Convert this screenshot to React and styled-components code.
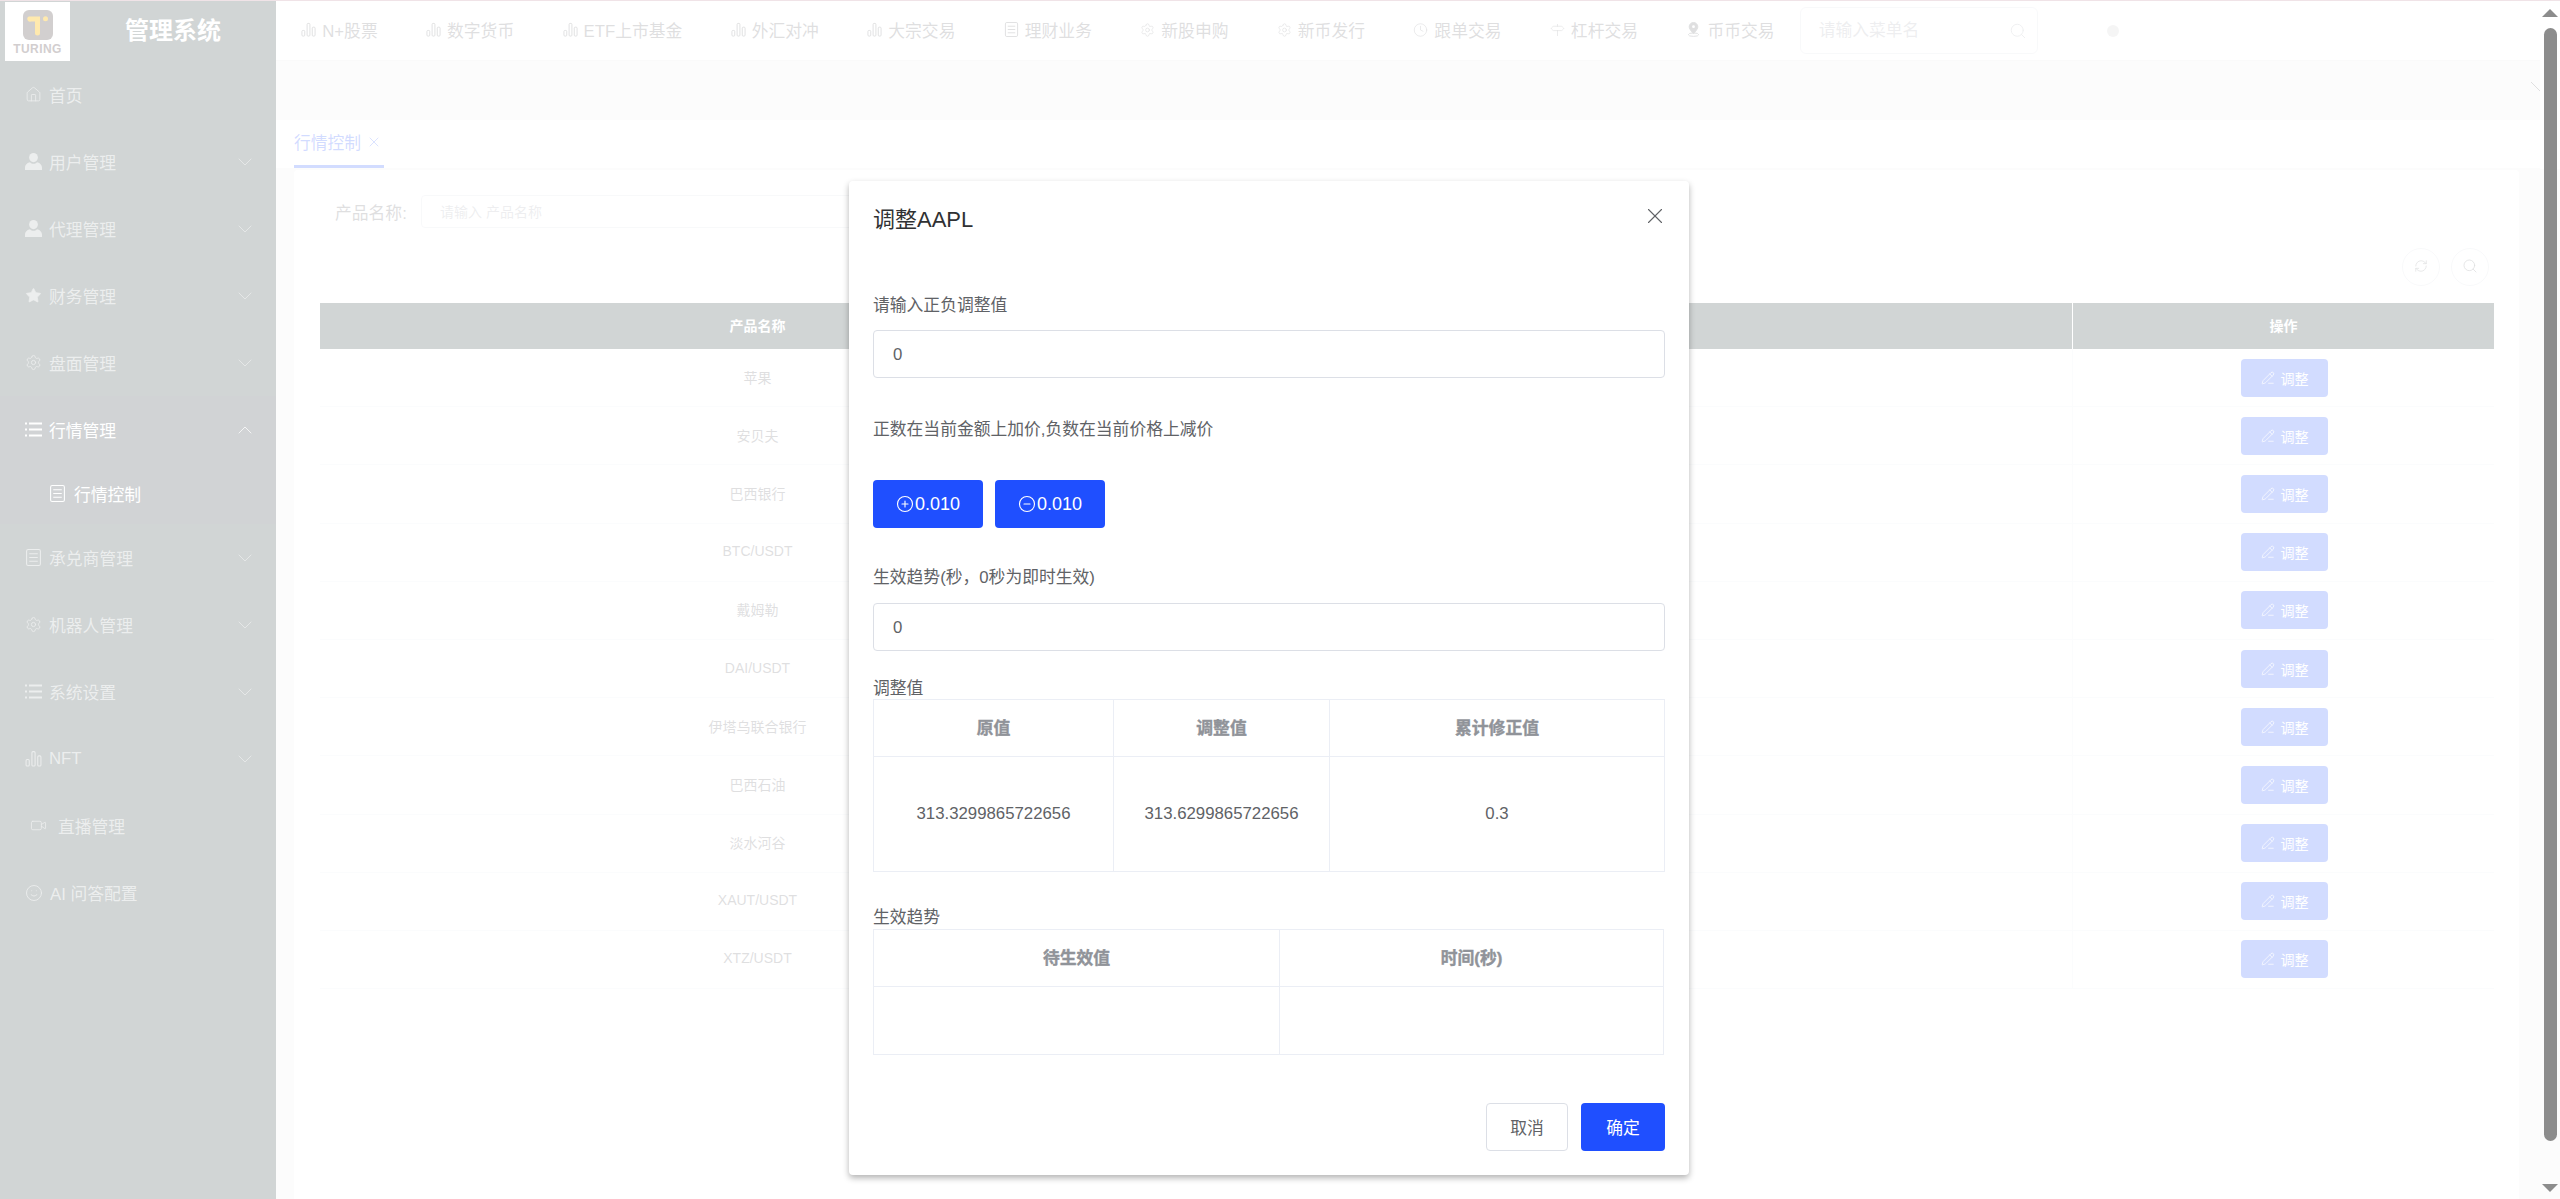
import React from "react";
import styled, { createGlobalStyle } from "styled-components";
import {
  ChevronDown,
  ChevronUp,
  CircleMinus,
  CirclePlus,
  Clock,
  House,
  PencilLine,
  RefreshCw,
  Search,
  Settings,
  Signpost,
  Smile,
  Star,
  Video,
  X,
} from "lucide-react";

const GlobalStyle = createGlobalStyle`
  html, body {
    margin: 0;
    height: 100%;
    overflow: hidden;
    background: #fff;
  }
  body, input, button {
    font-family: "Liberation Sans", "Noto Sans CJK SC", sans-serif;
  }
  * {
    box-sizing: border-box;
  }
`;

const BarsIcon = ({ size = 15 }) => (
  <svg width={size} height={size} viewBox="0 0 16 16" fill="none" stroke="currentColor" strokeWidth="1">
    <rect x="1" y="9" width="3" height="6" rx="1" />
    <rect x="6.5" y="1.5" width="3" height="13.5" rx="1" />
    <rect x="12" y="5.5" width="3" height="9.5" rx="1" />
  </svg>
);

const DocIcon = ({ size = 15 }) => (
  <svg width={size} height={size} viewBox="0 0 16 16" fill="none" stroke="currentColor" strokeWidth="1">
    <rect x="1.5" y="0.5" width="13" height="15" rx="1.5" />
    <path d="M4 4.5h8M4 8h8M4 11.5h8" />
  </svg>
);

const PinIcon = ({ size = 15 }) => (
  <svg width={size} height={size} viewBox="0 0 16 16" fill="none" stroke="currentColor" strokeWidth="1">
    <path
      d="M8 .5a4.6 4.6 0 0 0-4.6 4.6C3.4 8 8 12.5 8 12.5s4.6-4.5 4.6-7.4A4.6 4.6 0 0 0 8 .5Z"
      fill="currentColor"
    />
    <circle cx="8" cy="5" r="1.5" fill="#fff" stroke="none" />
    <ellipse cx="8" cy="13.5" rx="5.5" ry="1.8" />
  </svg>
);

const ListIcon = ({ size = 17 }) => (
  <svg width={size} height={size} viewBox="0 0 17 17" fill="currentColor">
    <rect x="0" y="1.5" width="2" height="2" />
    <rect x="4" y="1.5" width="13" height="2" />
    <rect x="0" y="7.5" width="2" height="2" />
    <rect x="4" y="7.5" width="13" height="2" />
    <rect x="0" y="13.5" width="2" height="2" />
    <rect x="4" y="13.5" width="13" height="2" />
  </svg>
);

const UserIcon = ({ size = 17 }) => (
  <svg width={size} height={size} viewBox="0 0 17 17" fill="currentColor">
    <ellipse cx="8.5" cy="4.6" rx="4.4" ry="4.6" />
    <path d="M0 17v-2.6C0 11.6 2.6 9.6 5 9.2c1 1 2.2 1.5 3.5 1.5S11 10.200 12 9.200c2.400.4 5 2.400 5 5.200V17Z" />
  </svg>
);

const Page = styled.div`
  display: flex;
  flex-direction: column;
  height: 100vh;
`;

const TopLine = styled.div`
  flex: 0 0 1px;
  background: #f0e3e7;
`;

const Shell = styled.div`
  flex: 1;
  min-height: 0;
  display: flex;
`;

const Viewport = styled.div`
  position: relative;
  flex: 1;
  min-width: 0;
  display: flex;
`;

const Sidebar = styled.aside`
  flex: 0 0 276px;
  display: flex;
  flex-direction: column;
  background: #192d2d;
`;

const Brand = styled.div`
  display: flex;
  align-items: center;
  height: 60px;
`;

const LogoBox = styled.div`
  position: relative;
  z-index: 11;
  display: flex;
  flex-direction: column;
  align-items: center;
  width: 65px;
  height: 59px;
  margin-left: 5px;
  padding-top: 8px;
  background: #fff;
`;

const LogoMark = styled.svg`
  display: block;
  width: 30px;
  height: 30px;
`;

const LogoText = styled.span`
  margin-top: 1px;
  font-size: 12px;
  font-weight: 700;
  letter-spacing: 0.4px;
  line-height: 16px;
  color: #d2cecf;
`;

const BrandTitle = styled.h1`
  margin: 0 0 5px 55px;
  font-size: 24px;
  font-weight: 700;
  color: #fff;
`;

const MenuRow = styled.div`
  display: flex;
  align-items: center;
  gap: ${(p) => (p.$wide ? "11px" : "7px")};
  height: 67px;
  padding: 0 19px 0 ${(p) => (p.$wide ? "30px" : "25px")};
  font-size: 16.8px;
  color: ${(p) => (p.$active ? "#fff" : "#a0a8a8")};
  background: ${(p) => (p.$active ? "#192530" : "transparent")};
`;

const MenuArrow = styled.span`
  display: flex;
  margin-left: auto;
  opacity: 0.75;
`;

const SubRow = styled.div`
  display: flex;
  align-items: center;
  gap: 8px;
  height: 61px;
  padding-left: 49px;
  font-size: 16.8px;
  color: #fff;
  background: #192530;
`;

const Main = styled.div`
  flex: 1;
  min-width: 0;
  display: flex;
  flex-direction: column;
`;

const Header = styled.header`
  display: flex;
  align-items: center;
  height: 60px;
  padding-left: 1px;
  border-bottom: 1px solid #e6e6e6;
`;

const NavItem = styled.div`
  display: flex;
  align-items: center;
  gap: 6px;
  margin-top: -2px;
  padding: 0 24.2px;
  font-size: 16.8px;
  white-space: nowrap;
  color: #606266;
`;

const NavIcon = styled.span`
  display: flex;
  justify-content: center;
  width: 15px;
`;

const MenuSearch = styled.div`
  display: flex;
  align-items: center;
  width: 238px;
  height: 47px;
  margin-left: 1px;
  padding: 0 10px 0 18px;
  border: 1px solid #dcdfe6;
  border-radius: 6px;
  color: #a8abb2;
`;

const MenuSearchInput = styled.input`
  flex: 1;
  min-width: 0;
  border: 0;
  outline: 0;
  padding: 0;
  font-size: 16.8px;
  &::placeholder {
    color: #a8abb2;
  }
`;

const Avatar = styled.div`
  width: 12px;
  height: 12px;
  margin-left: 69px;
  border-radius: 50%;
  background: #cdcdcd;
`;

const Crumbs = styled.div`
  display: flex;
  justify-content: flex-end;
  height: 59px;
  padding-top: 21px;
  background: #f0f0f0;
  color: #606266;
`;

const TabBar = styled.div`
  display: flex;
  height: 48px;
  padding-left: 18px;
`;

const Tab = styled.div`
  display: flex;
  align-items: center;
  gap: 5px;
  width: 90px;
  height: 48px;
  padding-bottom: 1px;
  border-bottom: 3px solid #1f4fff;
  font-size: 16.8px;
  white-space: nowrap;
  color: #1f4fff;
`;

const Content = styled.div`
  flex: 1;
  min-height: 0;
  display: flex;
  padding: 2px 21px 0 18px;
  background: #f0f0f0;
`;

const Card = styled.section`
  flex: 1;
  min-width: 0;
  padding: 25px 25px 0 26px;
  border-radius: 4px 4px 0 0;
  background: #fff;
`;

const FilterRow = styled.div`
  display: flex;
  align-items: center;
  gap: 16px;
  padding-left: 15px;
`;

const FilterLabel = styled.label`
  width: 70px;
  font-size: 16.8px;
  white-space: nowrap;
  color: #606266;
`;

const FilterInput = styled.input`
  width: 520px;
  height: 33px;
  padding: 0 18px;
  border: 1px solid #dcdfe6;
  border-radius: 4px;
  outline: 0;
  font-size: 14px;
  &::placeholder {
    color: #a8abb2;
  }
`;

const Tools = styled.div`
  display: flex;
  justify-content: flex-end;
  gap: 11px;
  margin: 20px 5px 17px 0;
`;

const RoundButton = styled.button`
  display: flex;
  align-items: center;
  justify-content: center;
  width: 38px;
  height: 38px;
  padding: 0 0 2px;
  border: 1px solid #dcdfe6;
  border-radius: 50%;
  background: #fff;
  color: #606266;
`;

const GRID = "876px 877px 421px";

const TableHead = styled.div`
  display: grid;
  grid-template-columns: ${GRID};
  height: 46px;
  background: #192d2d;
  font-size: 14px;
  font-weight: 700;
  color: #fff;
`;

const HeadCell = styled.div`
  display: flex;
  align-items: center;
  justify-content: center;
  padding-bottom: 3px;
  border-right: 1px solid #fff;
  &:last-child {
    border-right: 0;
  }
`;

const TableRow = styled.div`
  display: grid;
  grid-template-columns: ${GRID};
  height: 58.2px;
  border-bottom: 1px solid #ebeef5;
  font-size: 14px;
  color: #606266;
`;

const RowCell = styled.div`
  display: flex;
  align-items: center;
  justify-content: center;
  padding: ${(p) => (p.$action ? "0 0 0 2px" : "0 0 2px")};
  border-right: 1px solid #ebeef5;
  &:last-child {
    border-right: 0;
  }
`;

const AdjustButton = styled.button`
  display: flex;
  align-items: center;
  justify-content: center;
  gap: 6px;
  width: 87px;
  height: 38px;
  padding: 0;
  border: 0;
  border-radius: 4px;
  background: #1f4fff;
  font-size: 14px;
  color: #fff;
`;

const ScrollTrack = styled.div`
  flex: 0 0 20px;
  display: flex;
  flex-direction: column;
  align-items: center;
  padding: 8px 0 7px;
  background: linear-gradient(#fff 168px, #fcfcfc 168px);
`;

const ScrollArrow = styled.div`
  width: 0;
  height: 0;
  border-left: 8px solid transparent;
  border-right: 8px solid transparent;
  ${(p) => (p.$down ? "border-top: 8px solid #8c8c8c;" : "border-bottom: 8px solid #8c8c8c;")}
`;

const ScrollThumb = styled.div`
  width: 13px;
  height: 1113px;
  margin: 11px 0 auto;
  border-radius: 7px;
  background: #8c8c8c;
`;

const Overlay = styled.div`
  position: absolute;
  inset: 0;
  z-index: 10;
  display: flex;
  justify-content: center;
  padding: 180px 2px 0 0;
  background: rgba(255, 255, 255, 0.8);
`;

const Modal = styled.div`
  width: 840px;
  height: 994px;
  padding: 0 24px;
  border-radius: 4px;
  background: #fff;
  box-shadow: 0 3px 6px rgba(0, 0, 0, 0.3);
`;

const ModalHead = styled.div`
  display: flex;
  align-items: center;
  justify-content: space-between;
  height: 76px;
  padding-bottom: 4px;
  color: #303133;
`;

const ModalTitle = styled.h2`
  margin: 0;
  font-size: 22px;
  font-weight: 400;
`;

const CloseButton = styled.span`
  display: flex;
  margin: -2px -3px 0 0;
  color: #606266;
`;

const FieldLabel = styled.div`
  margin-top: ${(p) => p.$top}px;
  font-size: 16.8px;
  line-height: ${(p) => p.$line || 24}px;
  color: #606266;
`;

const FieldInput = styled.input`
  display: block;
  width: 100%;
  height: 48px;
  margin-top: ${(p) => p.$top}px;
  padding: 2px 19px 0;
  border: 1px solid #dcdfe6;
  border-radius: 4px;
  outline: 0;
  font-size: 16.8px;
  color: #606266;
`;

const StepRow = styled.div`
  display: flex;
  gap: 12px;
  margin-top: 38px;
`;

const PrimaryButton = styled.button`
  display: flex;
  align-items: center;
  justify-content: center;
  gap: 1px;
  width: ${(p) => p.$width}px;
  height: 48px;
  padding: 0;
  border: 0;
  border-radius: 4px;
  background: #1f4fff;
  font-size: ${(p) => p.$size || 16.8}px;
  color: #fff;
`;

const GhostButton = styled.button`
  width: 82px;
  height: 48px;
  padding: 0;
  border: 1px solid #dcdfe6;
  border-radius: 4px;
  background: #fff;
  font-size: 16.8px;
  color: #606266;
`;

const InfoTable = styled.div`
  display: grid;
  grid-template-columns: ${(p) => p.$cols};
  grid-template-rows: 57px ${(p) => p.$body}px;
  width: ${(p) => p.$width}px;
  border-top: 1px solid #ebeef5;
  border-left: 1px solid #ebeef5;
`;

const InfoCell = styled.div`
  display: flex;
  align-items: center;
  justify-content: center;
  padding-bottom: ${(p) => (p.$head ? "3px" : "0")};
  border-right: 1px solid #ebeef5;
  border-bottom: 1px solid #ebeef5;
  font-size: 16.8px;
  font-weight: ${(p) => (p.$head ? 700 : 400)};
  color: ${(p) => (p.$head ? "#909399" : "#606266")};
  -webkit-text-stroke: ${(p) => (p.$head ? "0.4px #909399" : "0")};
`;

const ModalFooter = styled.div`
  display: flex;
  justify-content: flex-end;
  gap: 13px;
  margin-top: 48px;
`;

const menuTop = [
  { icon: <House size={17} strokeWidth={1.2} />, text: "首页" },
  { icon: <UserIcon />, text: "用户管理", arrow: true },
  { icon: <UserIcon />, text: "代理管理", arrow: true },
  { icon: <Star size={17} strokeWidth={1} fill="currentColor" />, text: "财务管理", arrow: true },
  { icon: <Settings size={17} strokeWidth={1.2} />, text: "盘面管理", arrow: true },
];

const menuBottom = [
  { icon: <DocIcon size={17} />, text: "承兑商管理", arrow: true },
  { icon: <Settings size={17} strokeWidth={1.2} />, text: "机器人管理", arrow: true },
  { icon: <ListIcon />, text: "系统设置", arrow: true },
  { icon: <BarsIcon size={17} />, text: "NFT", arrow: true },
  { icon: <Video size={17} strokeWidth={1.2} />, text: "直播管理", wide: true },
  { icon: <Smile size={18} strokeWidth={1.2} />, text: "AI 问答配置" },
];

const navItems = [
  { icon: <BarsIcon />, text: "N+股票" },
  { icon: <BarsIcon />, text: "数字货币" },
  { icon: <BarsIcon />, text: "ETF上市基金" },
  { icon: <BarsIcon />, text: "外汇对冲" },
  { icon: <BarsIcon />, text: "大宗交易" },
  { icon: <DocIcon />, text: "理财业务" },
  { icon: <Settings size={16} strokeWidth={1} />, text: "新股申购" },
  { icon: <Settings size={16} strokeWidth={1} />, text: "新币发行" },
  { icon: <Clock size={18} strokeWidth={1} />, text: "跟单交易" },
  { icon: <Signpost size={16} strokeWidth={1} />, text: "杠杆交易" },
  { icon: <PinIcon />, text: "币币交易" },
];

const products = [
  "苹果",
  "安贝夫",
  "巴西银行",
  "BTC/USDT",
  "戴姆勒",
  "DAI/USDT",
  "伊塔乌联合银行",
  "巴西石油",
  "淡水河谷",
  "XAUT/USDT",
  "XTZ/USDT",
];

const SideItem = ({ item }) => (
  <MenuRow $wide={item.wide}>
    {item.icon}
    <span>{item.text}</span>
    {item.arrow && (
      <MenuArrow>
        <ChevronDown size={24} strokeWidth={1} />
      </MenuArrow>
    )}
  </MenuRow>
);

const App = () => {
  return (
    <Page>
      <GlobalStyle />
      <TopLine />
      <Shell>
        <Viewport>
          <Sidebar>
            <Brand>
              <LogoBox>
                <LogoMark viewBox="0 0 30 30">
                  <rect width="30" height="30" rx="6" fill="#d2cfcf" />
                  <path d="M6 6.500h11v16.500a2.500 2.500 0 0 1-5 0V11.500H8a2.500 2.500 0 0 1-2-5Z" fill="#ffe9ae" />
                  <circle cx="22.500" cy="8.800" r="2.500" fill="#ffe9ae" />
                </LogoMark>
                <LogoText>TURING</LogoText>
              </LogoBox>
              <BrandTitle>管理系统</BrandTitle>
            </Brand>
            {menuTop.map((item) => (
              <SideItem key={item.text} item={item} />
            ))}
            <MenuRow $active>
              <ListIcon />
              <span>行情管理</span>
              <MenuArrow>
                <ChevronUp size={24} strokeWidth={1} />
              </MenuArrow>
            </MenuRow>
            <SubRow>
              <DocIcon size={17} />
              <span>行情控制</span>
            </SubRow>
            {menuBottom.map((item) => (
              <SideItem key={item.text} item={item} />
            ))}
          </Sidebar>

          <Main>
            <Header>
              {navItems.map((item) => (
                <NavItem key={item.text}>
                  <NavIcon>{item.icon}</NavIcon>
                  <span>{item.text}</span>
                </NavItem>
              ))}
              <MenuSearch>
                <MenuSearchInput placeholder="请输入菜单名" />
                <Search size={18} strokeWidth={1.2} />
              </MenuSearch>
              <Avatar />
            </Header>
            <Crumbs>
              <svg width="9" height="9" viewBox="0 0 9 9" stroke="currentColor" strokeWidth="1">
                <path d="M0 0l9 9" />
              </svg>
            </Crumbs>
            <TabBar>
              <Tab>
                <span>行情控制</span>
                <X size={16} strokeWidth={1.2} />
              </Tab>
            </TabBar>
            <Content>
              <Card>
                <FilterRow>
                  <FilterLabel>产品名称:</FilterLabel>
                  <FilterInput placeholder="请输入 产品名称" />
                </FilterRow>
                <Tools>
                  <RoundButton>
                    <RefreshCw size={14} strokeWidth={1.2} />
                  </RoundButton>
                  <RoundButton>
                    <Search size={16} strokeWidth={1.2} />
                  </RoundButton>
                </Tools>
                <TableHead>
                  <HeadCell>产品名称</HeadCell>
                  <HeadCell />
                  <HeadCell>操作</HeadCell>
                </TableHead>
                {products.map((name) => (
                  <TableRow key={name}>
                    <RowCell>{name}</RowCell>
                    <RowCell />
                    <RowCell $action>
                      <AdjustButton>
                        <PencilLine size={14} strokeWidth={1.2} />
                        调整
                      </AdjustButton>
                    </RowCell>
                  </TableRow>
                ))}
              </Card>
            </Content>
          </Main>

          <Overlay>
            <Modal>
              <ModalHead>
                <ModalTitle>调整AAPL</ModalTitle>
                <CloseButton>
                  <X size={26} strokeWidth={1} />
                </CloseButton>
              </ModalHead>
              <FieldLabel $top={37}>请输入正负调整值</FieldLabel>
              <FieldInput $top={12} defaultValue="0" readOnly />
              <FieldLabel $top={40}>正数在当前金额上加价,负数在当前价格上减价</FieldLabel>
              <StepRow>
                <PrimaryButton $width={110} $size={18}>
                  <CirclePlus size={18} strokeWidth={1.5} />
                  0.010
                </PrimaryButton>
                <PrimaryButton $width={110} $size={18}>
                  <CircleMinus size={18} strokeWidth={1.5} />
                  0.010
                </PrimaryButton>
              </StepRow>
              <FieldLabel $top={38}>生效趋势(秒，0秒为即时生效)</FieldLabel>
              <FieldInput $top={13} defaultValue="0" readOnly />
              <FieldLabel $top={27} $line={21}>
                调整值
              </FieldLabel>
              <InfoTable $cols="240px 216px 335px" $body={115} $width={792}>
                <InfoCell $head>原值</InfoCell>
                <InfoCell $head>调整值</InfoCell>
                <InfoCell $head>累计修正值</InfoCell>
                <InfoCell>313.3299865722656</InfoCell>
                <InfoCell>313.6299865722656</InfoCell>
                <InfoCell>0.3</InfoCell>
              </InfoTable>
              <FieldLabel $top={35} $line={22}>
                生效趋势
              </FieldLabel>
              <InfoTable $cols="406px 384px" $body={68} $width={791}>
                <InfoCell $head>待生效值</InfoCell>
                <InfoCell $head>时间(秒)</InfoCell>
                <InfoCell />
                <InfoCell />
              </InfoTable>
              <ModalFooter>
                <GhostButton>取消</GhostButton>
                <PrimaryButton $width={84}>确定</PrimaryButton>
              </ModalFooter>
            </Modal>
          </Overlay>
        </Viewport>

        <ScrollTrack>
          <ScrollArrow />
          <ScrollThumb />
          <ScrollArrow $down />
        </ScrollTrack>
      </Shell>
    </Page>
  );
};

export default App;
